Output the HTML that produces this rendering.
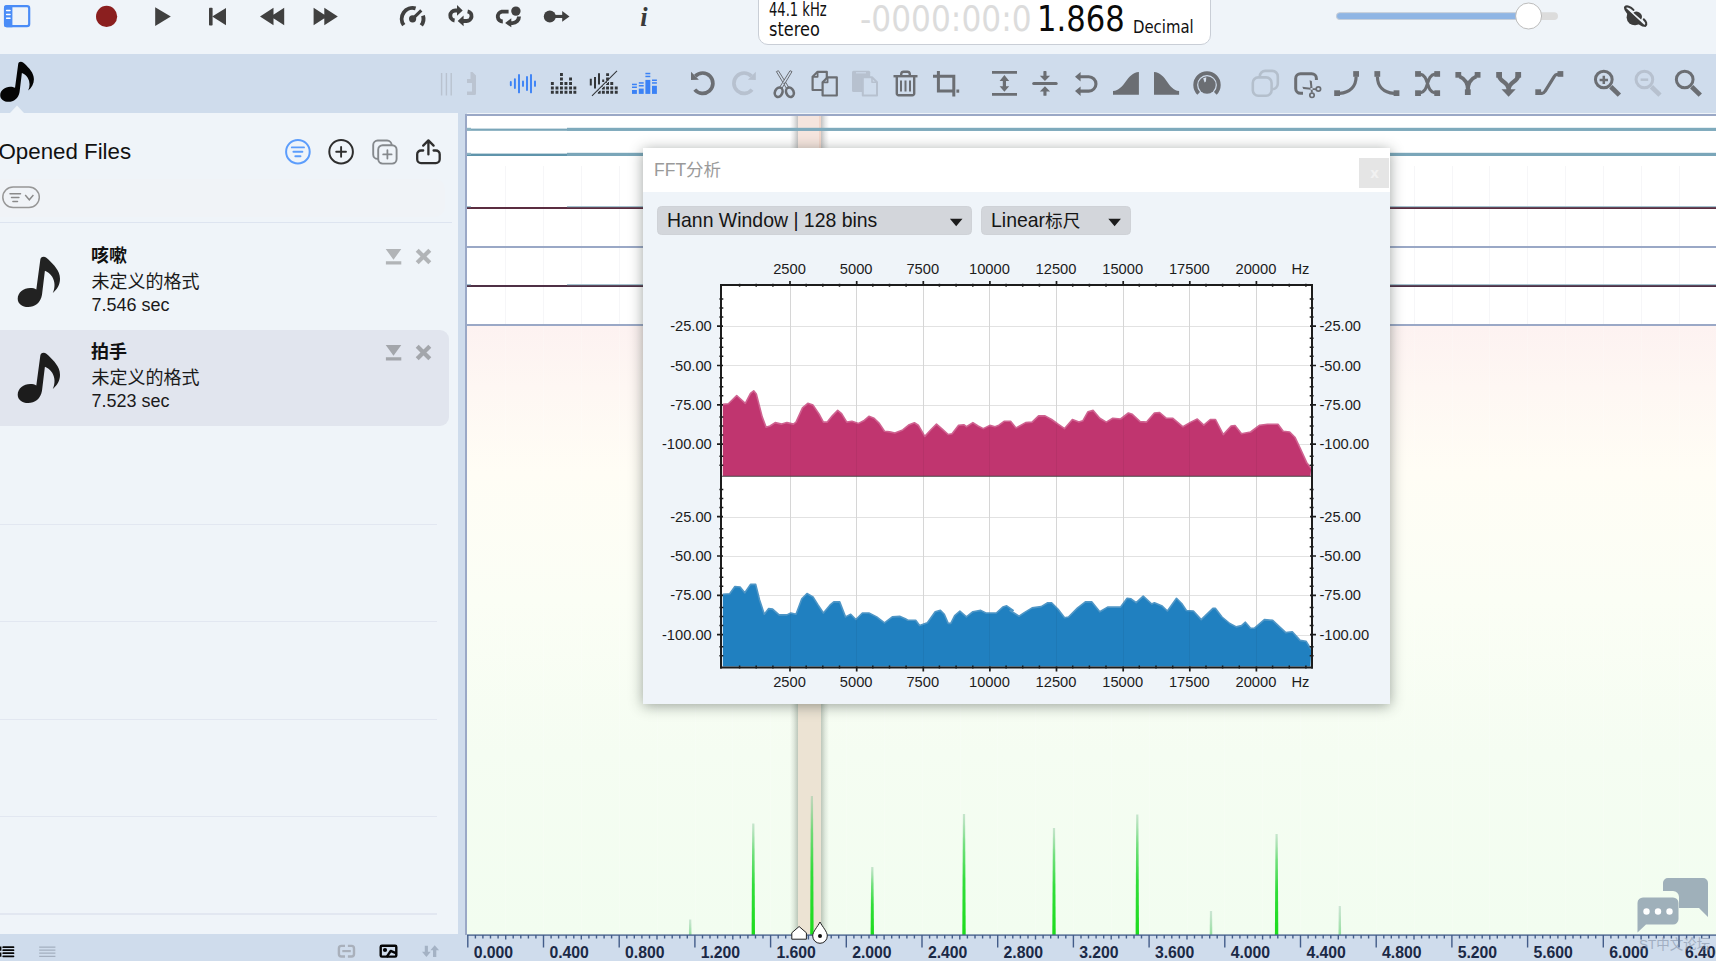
<!DOCTYPE html>
<html lang="zh"><head><meta charset="utf-8"><title>FFT</title><style>
*{box-sizing:border-box;margin:0;padding:0}
html,body{width:1716px;height:961px;overflow:hidden}
body{position:relative;background:#eff4f9;font-family:"Liberation Sans","Noto Sans CJK SC",sans-serif;color:#1a1a1a}
.abs{position:absolute}
.t{position:absolute;white-space:nowrap;line-height:1}
svg{position:absolute;left:0;top:0;overflow:visible}
#tb2{left:0;top:54px;width:1716px;height:59px;background:#cfdcec}
#side{left:0;top:113px;width:458px;height:821px;background:#eff4f9}
#split{left:458px;top:113px;width:9px;height:848px;background:#cfdcec}
#botbar{left:0;top:934px;width:1716px;height:27px;background:#cfdcec}
.hl{position:absolute;left:0;height:2px;background:#e1e7f1}
.cond{font-family:"DejaVu Sans","Liberation Sans",sans-serif}
</style></head><body>
<div class="abs" id="tb2"></div>
<div class="abs" id="side"></div>
<div class="abs" id="split"></div>
<div class="abs" id="botbar"></div>
<div class="abs" style="left:465px;top:114px;width:1251px;height:821px;background:#9aa8c6"></div>
<div class="abs" style="left:467px;top:116px;width:1249px;height:210px;background:#fff"></div>
<div class="abs" style="left:467px;top:326px;width:1249px;height:609px;background:linear-gradient(180deg,#fdf2f1 0%,#fef7f3 10%,#fffdf5 24%,#fbfef5 45%,#f5fdf2 70%,#f2fdf0 100%)"></div>
<svg width="1716" height="961" viewBox="0 0 1716 961"><rect x="505" y="166" width="1" height="158" fill="#f6f6f8"/><rect x="505" y="326" width="1" height="608" fill="#ffffff" opacity="0.18"/><rect x="543" y="166" width="1" height="158" fill="#f6f6f8"/><rect x="543" y="326" width="1" height="608" fill="#ffffff" opacity="0.18"/><rect x="581" y="166" width="1" height="158" fill="#f6f6f8"/><rect x="581" y="326" width="1" height="608" fill="#ffffff" opacity="0.18"/><rect x="619" y="166" width="1" height="158" fill="#f6f6f8"/><rect x="619" y="326" width="1" height="608" fill="#ffffff" opacity="0.18"/><rect x="657" y="166" width="1" height="158" fill="#f6f6f8"/><rect x="657" y="326" width="1" height="608" fill="#ffffff" opacity="0.18"/><rect x="695" y="166" width="1" height="158" fill="#f6f6f8"/><rect x="695" y="326" width="1" height="608" fill="#ffffff" opacity="0.18"/><rect x="732" y="166" width="1" height="158" fill="#f6f6f8"/><rect x="732" y="326" width="1" height="608" fill="#ffffff" opacity="0.18"/><rect x="770" y="166" width="1" height="158" fill="#f6f6f8"/><rect x="770" y="326" width="1" height="608" fill="#ffffff" opacity="0.18"/><rect x="808" y="166" width="1" height="158" fill="#f6f6f8"/><rect x="808" y="326" width="1" height="608" fill="#ffffff" opacity="0.18"/><rect x="846" y="166" width="1" height="158" fill="#f6f6f8"/><rect x="846" y="326" width="1" height="608" fill="#ffffff" opacity="0.18"/><rect x="884" y="166" width="1" height="158" fill="#f6f6f8"/><rect x="884" y="326" width="1" height="608" fill="#ffffff" opacity="0.18"/><rect x="922" y="166" width="1" height="158" fill="#f6f6f8"/><rect x="922" y="326" width="1" height="608" fill="#ffffff" opacity="0.18"/><rect x="960" y="166" width="1" height="158" fill="#f6f6f8"/><rect x="960" y="326" width="1" height="608" fill="#ffffff" opacity="0.18"/><rect x="997" y="166" width="1" height="158" fill="#f6f6f8"/><rect x="997" y="326" width="1" height="608" fill="#ffffff" opacity="0.18"/><rect x="1035" y="166" width="1" height="158" fill="#f6f6f8"/><rect x="1035" y="326" width="1" height="608" fill="#ffffff" opacity="0.18"/><rect x="1073" y="166" width="1" height="158" fill="#f6f6f8"/><rect x="1073" y="326" width="1" height="608" fill="#ffffff" opacity="0.18"/><rect x="1111" y="166" width="1" height="158" fill="#f6f6f8"/><rect x="1111" y="326" width="1" height="608" fill="#ffffff" opacity="0.18"/><rect x="1149" y="166" width="1" height="158" fill="#f6f6f8"/><rect x="1149" y="326" width="1" height="608" fill="#ffffff" opacity="0.18"/><rect x="1187" y="166" width="1" height="158" fill="#f6f6f8"/><rect x="1187" y="326" width="1" height="608" fill="#ffffff" opacity="0.18"/><rect x="1224" y="166" width="1" height="158" fill="#f6f6f8"/><rect x="1224" y="326" width="1" height="608" fill="#ffffff" opacity="0.18"/><rect x="1262" y="166" width="1" height="158" fill="#f6f6f8"/><rect x="1262" y="326" width="1" height="608" fill="#ffffff" opacity="0.18"/><rect x="1300" y="166" width="1" height="158" fill="#f6f6f8"/><rect x="1300" y="326" width="1" height="608" fill="#ffffff" opacity="0.18"/><rect x="1338" y="166" width="1" height="158" fill="#f6f6f8"/><rect x="1338" y="326" width="1" height="608" fill="#ffffff" opacity="0.18"/><rect x="1376" y="166" width="1" height="158" fill="#f6f6f8"/><rect x="1376" y="326" width="1" height="608" fill="#ffffff" opacity="0.18"/><rect x="1414" y="166" width="1" height="158" fill="#f6f6f8"/><rect x="1414" y="326" width="1" height="608" fill="#ffffff" opacity="0.18"/><rect x="1452" y="166" width="1" height="158" fill="#f6f6f8"/><rect x="1452" y="326" width="1" height="608" fill="#ffffff" opacity="0.18"/><rect x="1489" y="166" width="1" height="158" fill="#f6f6f8"/><rect x="1489" y="326" width="1" height="608" fill="#ffffff" opacity="0.18"/><rect x="1527" y="166" width="1" height="158" fill="#f6f6f8"/><rect x="1527" y="326" width="1" height="608" fill="#ffffff" opacity="0.18"/><rect x="1565" y="166" width="1" height="158" fill="#f6f6f8"/><rect x="1565" y="326" width="1" height="608" fill="#ffffff" opacity="0.18"/><rect x="1603" y="166" width="1" height="158" fill="#f6f6f8"/><rect x="1603" y="326" width="1" height="608" fill="#ffffff" opacity="0.18"/><rect x="1641" y="166" width="1" height="158" fill="#f6f6f8"/><rect x="1641" y="326" width="1" height="608" fill="#ffffff" opacity="0.18"/><rect x="1679" y="166" width="1" height="158" fill="#f6f6f8"/><rect x="1679" y="326" width="1" height="608" fill="#ffffff" opacity="0.18"/><defs><linearGradient id="bsh" x1="0" x2="1"><stop offset="0" stop-color="#607060" stop-opacity="0"/><stop offset="0.100" stop-color="#607060" stop-opacity="0.140"/><stop offset="0.205" stop-color="#607060" stop-opacity="0.380"/><stop offset="0.206" stop-color="#ece3d3" stop-opacity="1"/><stop offset="0.794" stop-color="#ece3d3" stop-opacity="1"/><stop offset="0.795" stop-color="#607060" stop-opacity="0.380"/><stop offset="0.900" stop-color="#607060" stop-opacity="0.140"/><stop offset="1" stop-color="#607060" stop-opacity="0"/></linearGradient><linearGradient id="bsh2" x1="0" x2="1"><stop offset="0" stop-color="#606060" stop-opacity="0"/><stop offset="0.100" stop-color="#606060" stop-opacity="0.140"/><stop offset="0.205" stop-color="#606060" stop-opacity="0.380"/><stop offset="0.206" stop-color="#f5e5de" stop-opacity="1"/><stop offset="0.750" stop-color="#f5e5de" stop-opacity="1"/><stop offset="0.751" stop-color="#f1d6ca" stop-opacity="1"/><stop offset="0.794" stop-color="#f1d6ca" stop-opacity="1"/><stop offset="0.795" stop-color="#606060" stop-opacity="0.380"/><stop offset="0.900" stop-color="#606060" stop-opacity="0.140"/><stop offset="1" stop-color="#606060" stop-opacity="0"/></linearGradient><linearGradient id="spk" x1="0" x2="0" y1="0" y2="1"><stop offset="0" stop-color="#8fc8a0" stop-opacity="0.450"/><stop offset="0.250" stop-color="#48d658" stop-opacity="0.750"/><stop offset="0.550" stop-color="#26dc30" stop-opacity="0.950"/><stop offset="1" stop-color="#1cdc1c" stop-opacity="1"/></linearGradient><linearGradient id="spf" x1="0" x2="0" y1="0" y2="1"><stop offset="0" stop-color="#9cc8b0" stop-opacity="0.450"/><stop offset="1" stop-color="#60d070" stop-opacity="0.650"/></linearGradient></defs><rect x="790" y="116" width="39" height="40" fill="url(#bsh2)"/><rect x="790" y="700" width="39" height="235" fill="url(#bsh)"/><rect x="467" y="128.6" width="1249" height="2.2" fill="#7aa6b9"/><rect x="567" y="127.8" width="1149" height="3" fill="#7eaabc"/><rect x="467" y="127.8" width="4" height="2" fill="#8fb5c4"/><rect x="467" y="153.6" width="1249" height="2.4" fill="#5f94ab"/><rect x="567" y="152.8" width="1149" height="3.2" fill="#7aa6b9"/><rect x="467" y="152.8" width="4" height="2" fill="#8fb5c4"/><rect x="467" y="207" width="1249" height="2" fill="#5b2d40"/><rect x="567" y="206.2" width="1149" height="1" fill="#8fb5c4"/><rect x="467" y="206.2" width="4" height="1" fill="#8fb5c4"/><rect x="467" y="246" width="1249" height="2" fill="#9aa8c6"/><rect x="467" y="285" width="1249" height="2" fill="#4f3045"/><rect x="567" y="284.2" width="1149" height="1" fill="#8fb5c4"/><rect x="467" y="284.2" width="4" height="1" fill="#8fb5c4"/><rect x="467" y="324" width="1249" height="2" fill="#9aa8c6"/><path d="M688.9 935 L689.1 919.5 L691.3 919.5 L691.5 935 Z" fill="url(#spf)"/><path d="M751.6 935 L752.2 823.5 L754.4 823.5 L755.0 935 Z" fill="url(#spk)"/><path d="M810.2 935 L810.8 796.0 L813.0 796.0 L813.6 935 Z" fill="url(#spk)"/><path d="M870.6 935 L871.2 867.0 L873.4 867.0 L874.0 935 Z" fill="url(#spk)"/><path d="M962.3 935 L962.9 814.0 L965.1 814.0 L965.7 935 Z" fill="url(#spk)"/><path d="M1052.3 935 L1052.9 828.0 L1055.1 828.0 L1055.7 935 Z" fill="url(#spk)"/><path d="M1135.6 935 L1136.2 814.5 L1138.4 814.5 L1139.0 935 Z" fill="url(#spk)"/><path d="M1209.7 935 L1209.9 911.0 L1212.1 911.0 L1212.3 935 Z" fill="url(#spf)"/><path d="M1274.9 935 L1275.5 834.0 L1277.7 834.0 L1278.3 935 Z" fill="url(#spk)"/><path d="M1338.5 935 L1338.7 906.0 L1340.9 906.0 L1341.1 935 Z" fill="url(#spf)"/><rect x="467" y="934.400" width="1249" height="1.400" fill="#4b658f"/><path d="M467.8 935v12.4 M475.4 935v3.6 M482.9 935v3.6 M490.5 935v3.6 M498.1 935v3.6 M505.7 935v4.6 M513.2 935v3.6 M520.8 935v3.6 M528.4 935v3.6 M535.9 935v3.6 M543.5 935v12.4 M551.1 935v3.6 M558.6 935v3.6 M566.2 935v3.6 M573.8 935v3.6 M581.3 935v4.6 M588.9 935v3.6 M596.5 935v3.6 M604.1 935v3.6 M611.6 935v3.6 M619.2 935v12.4 M626.8 935v3.6 M634.3 935v3.6 M641.9 935v3.6 M649.5 935v3.6 M657.0 935v4.6 M664.6 935v3.6 M672.2 935v3.6 M679.8 935v3.6 M687.3 935v3.6 M694.9 935v12.4 M702.5 935v3.6 M710.0 935v3.6 M717.6 935v3.6 M725.2 935v3.6 M732.8 935v4.6 M740.3 935v3.6 M747.9 935v3.6 M755.5 935v3.6 M763.0 935v3.6 M770.6 935v12.4 M778.2 935v3.6 M785.7 935v3.6 M793.3 935v3.6 M800.9 935v3.6 M808.4 935v4.6 M816.0 935v3.6 M823.6 935v3.6 M831.2 935v3.6 M838.7 935v3.6 M846.3 935v12.4 M853.9 935v3.6 M861.4 935v3.6 M869.0 935v3.6 M876.6 935v3.6 M884.1 935v4.6 M891.7 935v3.6 M899.3 935v3.6 M906.9 935v3.6 M914.4 935v3.6 M922.0 935v12.4 M929.6 935v3.6 M937.1 935v3.6 M944.7 935v3.6 M952.3 935v3.6 M959.8 935v4.6 M967.4 935v3.6 M975.0 935v3.6 M982.6 935v3.6 M990.1 935v3.6 M997.7 935v12.4 M1005.3 935v3.6 M1012.8 935v3.6 M1020.4 935v3.6 M1028.0 935v3.6 M1035.5 935v4.6 M1043.1 935v3.6 M1050.7 935v3.6 M1058.3 935v3.6 M1065.8 935v3.6 M1073.4 935v12.4 M1081.0 935v3.6 M1088.5 935v3.6 M1096.1 935v3.6 M1103.7 935v3.6 M1111.2 935v4.6 M1118.8 935v3.6 M1126.4 935v3.6 M1134.0 935v3.6 M1141.5 935v3.6 M1149.1 935v12.4 M1156.7 935v3.6 M1164.2 935v3.6 M1171.8 935v3.6 M1179.4 935v3.6 M1187.0 935v4.6 M1194.5 935v3.6 M1202.1 935v3.6 M1209.7 935v3.6 M1217.2 935v3.6 M1224.8 935v12.4 M1232.4 935v3.6 M1239.9 935v3.6 M1247.5 935v3.6 M1255.1 935v3.6 M1262.6 935v4.6 M1270.2 935v3.6 M1277.8 935v3.6 M1285.4 935v3.6 M1292.9 935v3.6 M1300.5 935v12.4 M1308.1 935v3.6 M1315.6 935v3.6 M1323.2 935v3.6 M1330.8 935v3.6 M1338.3 935v4.6 M1345.9 935v3.6 M1353.5 935v3.6 M1361.1 935v3.6 M1368.6 935v3.6 M1376.2 935v12.4 M1383.8 935v3.6 M1391.3 935v3.6 M1398.9 935v3.6 M1406.5 935v3.6 M1414.0 935v4.6 M1421.6 935v3.6 M1429.2 935v3.6 M1436.8 935v3.6 M1444.3 935v3.6 M1451.9 935v12.4 M1459.5 935v3.6 M1467.0 935v3.6 M1474.6 935v3.6 M1482.2 935v3.6 M1489.8 935v4.6 M1497.3 935v3.6 M1504.9 935v3.6 M1512.5 935v3.6 M1520.0 935v3.6 M1527.6 935v12.4 M1535.2 935v3.6 M1542.7 935v3.6 M1550.3 935v3.6 M1557.9 935v3.6 M1565.5 935v4.6 M1573.0 935v3.6 M1580.6 935v3.6 M1588.2 935v3.6 M1595.7 935v3.6 M1603.3 935v12.4 M1610.9 935v3.6 M1618.4 935v3.6 M1626.0 935v3.6 M1633.6 935v3.6 M1641.1 935v4.6 M1648.7 935v3.6 M1656.3 935v3.6 M1663.9 935v3.6 M1671.4 935v3.6 M1679.0 935v12.4 M1686.6 935v3.6 M1694.1 935v3.6 M1701.7 935v3.6 M1709.3 935v3.6" stroke="#435c89" stroke-width="1.400" fill="none"/><path d="M791.800 939.200 V932.800 L799.100 926.500 L806.400 932.800 V939.200 Z" fill="#fff" stroke="#222" stroke-width="1" stroke-linejoin="round"/><path d="M820 922 C822.5 927 827.3 931.5 827.3 936 A7.3 7.3 0 0 1 812.7 936 C812.7 931.5 817.5 927 820 922 Z" fill="#fff" stroke="#222" stroke-width="1"/><circle cx="820" cy="936" r="2" fill="#111"/><g fill="#9fb0ba"><path d="M1668 878 h35 a5 5 0 0 1 5 5 v34 l-9 -9 h-20 v-11 a6 6 0 0 0 -6 -6 h-10 v-8 a5 5 0 0 1 5 -5 z"/><path d="M1643 897.5 h30 a5.5 5.5 0 0 1 5.500 5.500 v16 a5.500 5.500 0 0 1 -5.500 5.500 h-27 l-8.500 8 v-29.500 a5.500 5.500 0 0 1 5.500 -5.500 z"/></g><g fill="#fff"><circle cx="1646.500" cy="911.500" r="3.200"/><circle cx="1658" cy="911.500" r="3.200"/><circle cx="1669.500" cy="911.500" r="3.200"/></g></svg>
<div class="t" style="left:473.7px;top:944.5px;font-size:15.800px;font-weight:bold;color:#1b2946;letter-spacing:-0.050px">0.000</div>
<div class="t" style="left:549.4px;top:944.5px;font-size:15.800px;font-weight:bold;color:#1b2946;letter-spacing:-0.050px">0.400</div>
<div class="t" style="left:625.1px;top:944.5px;font-size:15.800px;font-weight:bold;color:#1b2946;letter-spacing:-0.050px">0.800</div>
<div class="t" style="left:700.8px;top:944.5px;font-size:15.800px;font-weight:bold;color:#1b2946;letter-spacing:-0.050px">1.200</div>
<div class="t" style="left:776.5px;top:944.5px;font-size:15.800px;font-weight:bold;color:#1b2946;letter-spacing:-0.050px">1.600</div>
<div class="t" style="left:852.2px;top:944.5px;font-size:15.800px;font-weight:bold;color:#1b2946;letter-spacing:-0.050px">2.000</div>
<div class="t" style="left:927.9px;top:944.5px;font-size:15.800px;font-weight:bold;color:#1b2946;letter-spacing:-0.050px">2.400</div>
<div class="t" style="left:1003.6px;top:944.5px;font-size:15.800px;font-weight:bold;color:#1b2946;letter-spacing:-0.050px">2.800</div>
<div class="t" style="left:1079.3px;top:944.5px;font-size:15.800px;font-weight:bold;color:#1b2946;letter-spacing:-0.050px">3.200</div>
<div class="t" style="left:1155.0px;top:944.5px;font-size:15.800px;font-weight:bold;color:#1b2946;letter-spacing:-0.050px">3.600</div>
<div class="t" style="left:1230.7px;top:944.5px;font-size:15.800px;font-weight:bold;color:#1b2946;letter-spacing:-0.050px">4.000</div>
<div class="t" style="left:1306.4px;top:944.5px;font-size:15.800px;font-weight:bold;color:#1b2946;letter-spacing:-0.050px">4.400</div>
<div class="t" style="left:1382.1px;top:944.5px;font-size:15.800px;font-weight:bold;color:#1b2946;letter-spacing:-0.050px">4.800</div>
<div class="t" style="left:1457.8px;top:944.5px;font-size:15.800px;font-weight:bold;color:#1b2946;letter-spacing:-0.050px">5.200</div>
<div class="t" style="left:1533.5px;top:944.5px;font-size:15.800px;font-weight:bold;color:#1b2946;letter-spacing:-0.050px">5.600</div>
<div class="t" style="left:1609.2px;top:944.5px;font-size:15.800px;font-weight:bold;color:#1b2946;letter-spacing:-0.050px">6.000</div>
<div class="t" style="left:1684.9px;top:944.5px;font-size:15.800px;font-weight:bold;color:#1b2946;letter-spacing:-0.050px">6.400</div>
<div class="t" style="left:1639px;top:938px;font-size:13.500px;color:#7d8aa0;opacity:0.55">ST中文论坛</div>
<svg width="1716" height="54" viewBox="0 0 1716 54"><rect x="5" y="6.2" width="24.200" height="20" rx="2.200" fill="none" stroke="#4a8cf7" stroke-width="2.200"/><path d="M6.200 5.200 H12.400 V27.200 H6.200 A2.200 2.200 0 0 1 4 25 V7.400 A2.200 2.200 0 0 1 6.200 5.200 Z" fill="#4a8cf7"/><path d="M6.600 10.500 h3.400 M6.600 14.400 h3.400 M6.600 18.300 h3.400" stroke="#fff" stroke-width="1.500" stroke-linecap="round"/><circle cx="106.600" cy="16.400" r="10.600" fill="#8b1f1f"/><path d="M155.200 7.200 L170.800 16.500 L155.200 25.900 Z" fill="#404040"/><rect x="209" y="7.700" width="3.600" height="17.800" rx="0.800" fill="#404040"/><path d="M226 7.900 V25.200 L212.200 16.500 Z" fill="#404040"/><path d="M273.500 7.800 V25.200 L260 16.500 Z M284.200 7.800 V25.200 L270.700 16.500 Z" fill="#404040"/><path d="M313.600 7.800 V25.200 L327.100 16.500 Z M324.300 7.800 V25.200 L337.800 16.500 Z" fill="#404040"/><g fill="none" stroke="#404040" stroke-width="3.900"><path d="M403.78 25.21 A10.900 10.900 0 0 1 415.60 8.32"/><path d="M423.02 15.61 A10.900 10.900 0 0 1 421.31 25.36"/><path d="M412.600 18.800 L421.300 10.400" stroke-width="3.100"/></g><circle cx="412.600" cy="18.800" r="3.600" fill="#404040"/><g fill="none" stroke="#404040" stroke-width="3.900"><path d="M458 10.500 H455.300 A5 5 0 0 0 454.600 20.450"/><path d="M463 21 H466.400 A4.900 4.900 0 0 0 467.600 11.300"/></g><path d="M457 5 L462.700 10.500 L457 15.800 Z M463.600 15.500 L457.700 20.900 L463.600 26.200 Z" fill="#404040"/><g fill="none" stroke="#404040" stroke-width="3.900"><path d="M508.600 11.600 H501.800 A5 5 0 0 0 502.800 21.500"/><path d="M510.500 23.100 H512.500 A6.500 6.500 0 0 0 519 16.600"/></g><path d="M511.300 18.300 L505.100 23.100 L511.300 27.300 Z" fill="#404040"/><circle cx="515.900" cy="11.100" r="4.700" fill="#404040"/><circle cx="549.800" cy="16.400" r="6" fill="#404040"/><rect x="555" y="14.900" width="8" height="3.100" fill="#404040"/><path d="M562.200 11.100 L569.500 16.400 L562.200 21.700 Z" fill="#404040"/><rect x="1336" y="12.200" width="222" height="7.800" rx="3.900" fill="#dcdcdc"/><rect x="1336.500" y="12.700" width="200" height="6.800" rx="3.400" fill="#8fb5e4" stroke="#c9cfd8" stroke-width="0.800"/><circle cx="1528.600" cy="16" r="13" fill="#fff" stroke="#b4b4b4" stroke-width="0.900"/><g transform="translate(1635.200 16.600) rotate(42)" fill="#3c3c3c"><path d="M-8.300 0.500 A8.300 8.300 0 0 0 8.300 0.500 Z"/><path d="M-13.600 -0.200 A13.600 3.200 0 0 0 13.600 -0.200 L12.500 0.800 L-12.500 0.500 Z" stroke="#3c3c3c" stroke-width="1.500" stroke-linejoin="round"/><path d="M-4 -1.700 A5.300 5.300 0 0 1 6.400 -1.700 Z"/><path d="M-13.700 0 C-14 -2.600 -10 -4.200 -5.800 -3.800 M13.700 0 C14 -2.300 11.400 -3.800 8.200 -3.700" fill="none" stroke="#3c3c3c" stroke-width="2.100" stroke-linecap="round"/></g></svg>
<div class="t" style="left:636px;top:1.5px;width:16px;text-align:center;font-family:'Liberation Serif',serif;font-style:italic;font-weight:bold;font-size:26.500px;line-height:30px;color:#3a3a3a">i</div>
<div class="abs" style="left:758px;top:-12px;width:453px;height:57px;background:#fff;border:1px solid #c9ced6;border-radius:10px"></div>
<div class="t cond" id="khz" style="left:769px;top:-0.5px;font-size:18.800px;line-height:20px;color:#111;transform-origin:0 0;transform:scaleX(0.6975)">44.1 kHz</div>
<div class="t cond" id="ste" style="left:769px;top:19.5px;font-size:19.500px;line-height:20px;color:#111;transform-origin:0 0;transform:scaleX(0.8280)">stereo</div>
<div class="t cond" id="tg" style="left:860px;top:-3.2px;font-size:36px;line-height:44px;color:#dcdcdc;transform-origin:0 0;transform:scaleX(0.8685)">-0000:00:0</div>
<div class="t cond" id="tb" style="left:1037px;top:-3.2px;font-size:36px;line-height:44px;color:#0a0a0a;transform-origin:0 0;transform:scaleX(0.8505)">1.868</div>
<div class="t cond" id="dec" style="left:1132.500px;top:15.5px;font-size:17.600px;line-height:22px;color:#111;transform-origin:0 0;transform:scaleX(0.8460)">Decimal</div>
<svg width="1716" height="120" viewBox="0 0 1716 120"><path d="M10 113 L17 105.500 L24 113 Z" fill="#eff4f9"/><path transform="translate(0.200 61.700) scale(0.797)" d="M25.900 0 C28 0 29.500 1.500 31 3 C36 8 42.300 14 42.300 22 C42.300 28 39.500 32.500 35.100 36.200 C37.500 31 37.500 25 34.500 20 C32.500 17 30 15.300 27.200 14.100 L24.300 38 C23 46 17 50.300 10.500 50.300 C4.500 50.300 0 47 0 42 C0 36 6 31.400 12.500 31.400 C15 31.400 17 31.900 18.600 32.800 L22.600 3 C22.800 1 24 0 25.900 0 Z" fill="#050505"/><path d="M441.600 73 V95.500 M446.400 73 V95.500 M451.200 73 V95.500" stroke="#b9c2cf" stroke-width="1.400" fill="none"/><path d="M470.500 72 H472.500 L476 75.500 V93.500 A1.500 1.500 0 0 1 474.500 95 H467 V91.500 H472 V83 H467 V79 H470.500 Z" fill="#bbc4d1"/><path d="M510.8 81.9 V85.2 M514.9 79.1 V88.0 M519.0 74.9 V92.4 M523.0 81.5 V85.9 M527.0 77.0 V90.1 M531.0 74.9 V92.4 M535.0 81.5 V85.9" stroke="#3b82f6" stroke-width="1.900" stroke-linecap="round" fill="none"/><path d="M550.9 82.1h2.900v2.900h-2.900zM550.9 86.5h2.900v2.900h-2.900zM550.9 90.8h2.900v2.900h-2.900zM555.5 86.5h2.900v2.900h-2.900zM555.5 90.8h2.900v2.900h-2.900zM560.0 73.1h2.900v2.900h-2.900zM560.0 77.5h2.900v2.900h-2.900zM560.0 82.1h2.900v2.900h-2.900zM560.0 86.5h2.900v2.900h-2.900zM560.0 90.8h2.900v2.900h-2.900zM564.5 82.1h2.900v2.900h-2.900zM564.5 86.5h2.900v2.900h-2.900zM564.5 90.8h2.900v2.900h-2.900zM569.1 77.5h2.900v2.900h-2.900zM569.1 82.1h2.900v2.900h-2.900zM569.1 86.5h2.900v2.900h-2.900zM569.1 90.8h2.900v2.900h-2.900zM573.4 86.5h2.900v2.900h-2.900zM573.4 90.8h2.900v2.900h-2.900z" fill="#333639"/><path d="M590.8 78.8 V85.5 M595.0 77.0 V88.6 M599.0 73.2 V84.5 M603.2 79.5 V82.0" stroke="#333639" stroke-width="2" fill="none"/><path d="M597.8 90.8h2.900v2.900h-2.900zM601.9 86.5h2.900v2.900h-2.900zM601.9 90.8h2.900v2.900h-2.900zM606.1 77.5h2.900v2.900h-2.900zM606.1 82.1h2.900v2.900h-2.900zM606.1 86.5h2.900v2.900h-2.900zM606.1 90.8h2.900v2.900h-2.900zM610.3 82.1h2.900v2.900h-2.900zM610.3 86.5h2.900v2.900h-2.900zM610.3 90.8h2.900v2.900h-2.900zM614.8 86.5h2.900v2.900h-2.900zM614.8 90.8h2.900v2.900h-2.900zM606.150 73.200h2.900v2.900h-2.900z" fill="#333639"/><path d="M592 95.800 L617 70.800" stroke="#333639" stroke-width="1.100"/><path d="M593.300 96.600 L618.300 71.600" stroke="#cfdcec" stroke-width="1"/><rect x="632.0" y="90.0" width="4.900" height="3.9" fill="#3b82f6"/><rect x="632.0" y="83.7" width="4.900" height="1.500" fill="#3b82f6"/><rect x="632.0" y="86.5" width="4.900" height="1.500" fill="#3b82f6"/><rect x="638.8" y="88.6" width="4.900" height="5.3" fill="#3b82f6"/><rect x="638.8" y="82.2" width="4.900" height="1.500" fill="#3b82f6"/><rect x="638.8" y="85.0" width="4.900" height="1.500" fill="#3b82f6"/><rect x="645.4" y="79.9" width="4.900" height="14.0" fill="#3b82f6"/><rect x="645.4" y="72.8" width="4.900" height="1.500" fill="#3b82f6"/><rect x="645.4" y="75.7" width="4.900" height="1.500" fill="#3b82f6"/><rect x="652.0" y="85.8" width="4.900" height="8.1" fill="#3b82f6"/><rect x="652.0" y="79.5" width="4.900" height="1.500" fill="#3b82f6"/><rect x="652.0" y="82.2" width="4.900" height="1.500" fill="#3b82f6"/><g transform="translate(702.7 83.2) scale(1 1)" ><path d="M-7.34 -7.09 A10.2 10.2 0 1 1 -7.93 6.42" fill="none" stroke="#6b6e73" stroke-width="3.700"/><path d="M-11.700 -11.400 V-3.200 L-3.800 -3.500 Z" fill="#6b6e73"/></g><g transform="translate(744.1 83.2) scale(-1 1)" ><path d="M-7.34 -7.09 A10.2 10.2 0 1 1 -7.93 6.42" fill="none" stroke="#b7c1cf" stroke-width="3.700"/><path d="M-11.700 -11.400 V-3.200 L-3.800 -3.500 Z" fill="#b7c1cf"/></g><g fill="#cfdcec" stroke="#6b6e73"><path d="M776.400 71.600 L778.400 70.700 L789.200 88 L786.600 88.600 Z" stroke-width="1" stroke-linejoin="round"/><path d="M792 71.600 L790 70.700 L779.200 88 L781.800 88.600 Z" stroke-width="1" stroke-linejoin="round"/><ellipse cx="778.700" cy="92.200" rx="3.700" ry="4.900" transform="rotate(22 778.700 92.200)" stroke-width="2.600" fill="none"/><ellipse cx="789.900" cy="92.200" rx="3.700" ry="4.900" transform="rotate(-22 789.900 92.200)" stroke-width="2.600" fill="none"/></g><circle cx="784.200" cy="83.400" r="0.800" fill="#6b6e73"/><path d="M817.6 71.8 H826.8 V90.0 H812.6 V76.8 Z" fill="#cfdcec" stroke="#6b6e73" stroke-width="2.2" stroke-linejoin="round"/><path d="M817.6 71.8 V76.8 H812.6" fill="none" stroke="#6b6e73" stroke-width="1.7600000000000002" stroke-linejoin="round"/><path d="M827.6 77.3 H836.8 V95.5 H822.6 V82.3 Z" fill="#cfdcec" stroke="#6b6e73" stroke-width="2.2" stroke-linejoin="round"/><path d="M827.6 77.3 V82.3 H822.6" fill="none" stroke="#6b6e73" stroke-width="1.7600000000000002" stroke-linejoin="round"/><rect x="852" y="70.700" width="18.200" height="21.300" rx="1.500" fill="#b7c1cf"/><rect x="856" y="72" width="10" height="1.500" fill="#cfdcec" opacity="0.700"/><path d="M862.8 77.2 H872.0 L877.0 82.2 V95.4 H862.8 Z" fill="#cfdcec" stroke="#b7c1cf" stroke-width="2" stroke-linejoin="round"/><path d="M872.0 77.2 V82.2 H877.0" fill="none" stroke="#b7c1cf" stroke-width="1.6" stroke-linejoin="round"/><g fill="none" stroke="#6b6e73" stroke-width="2.400"><path d="M893.500 76.200 H917.500"/><path d="M901.200 76 V74 A2.500 2.500 0 0 1 903.700 71.700 H907.300 A2.500 2.500 0 0 1 909.800 74 V76"/><path d="M896.800 76.200 V93.500 A1.800 1.800 0 0 0 898.600 95.300 H912.400 A1.800 1.800 0 0 0 914.200 93.500 V76.200"/><path d="M901 80.500 V91.500 M905.500 80.500 V91.500 M910 80.500 V91.500" stroke-width="2"/></g><g fill="none" stroke="#6b6e73" stroke-width="3"><path d="M938.400 71 V91 H953.600"/><path d="M933 76.200 H953.800 V96.600"/></g><rect x="956.400" y="89.500" width="2.800" height="3.200" fill="#6b6e73"/><path d="M992 71 H1017 V73.800 H992 Z M992 93 H1017 V95.800 H992 Z" fill="#6b6e73"/><path d="M1004.400 75 L1009.200 80.900 H1006 V86.300 H1009.200 L1004.400 91.800 L999.600 86.300 H1002.800 V80.900 H999.600 Z" fill="#6b6e73"/><rect x="1032.200" y="82" width="25.500" height="3" rx="1.500" fill="#6b6e73"/><path d="M1043.400 71.600 A0.600 0.600 0 0 1 1044 71 H1045.900 A0.600 0.600 0 0 1 1046.500 71.600 V75.800 H1050.100 L1044.950 80.900 L1039.800 75.800 H1043.400 Z M1043.400 95.200 A0.600 0.600 0 0 0 1044 95.800 H1045.900 A0.600 0.600 0 0 0 1046.500 95.200 V91.600 H1050.100 L1044.950 86.300 L1039.800 91.600 H1043.400 Z" fill="#6b6e73"/><path d="M1079.500 76.800 H1088.800 A7.150 7.150 0 0 1 1088.800 91.100 H1079.500" fill="none" stroke="#6b6e73" stroke-width="3.100"/><path d="M1080.600 72 V81.600 L1075 76.800 Z M1080.600 86.400 V95.900 L1075 91.100 Z" fill="#6b6e73"/><path d="M1113 94.800 V91 C1125 90.400 1126.500 72.600 1138.900 72 V94.800 Z" fill="#6b6e73"/><path d="M1154 72 C1166.400 72.600 1167.900 90.400 1179.100 91 V94.800 H1154 Z" fill="#6b6e73"/><circle cx="1207" cy="85" r="8.700" fill="#6b6e73"/><path d="M1198.650 93.350 A11.800 11.800 0 1 1 1215.350 93.350" fill="none" stroke="#6b6e73" stroke-width="3.800"/><path d="M1203.200 78.300 L1206.300 77.200 L1205.900 81.600 L1204.600 82.400 Z" fill="#d6e0ee"/><g fill="#cfdcec" stroke="#b4bfcc" stroke-width="2.600"><rect x="1259.800" y="70.900" width="18" height="18.400" rx="5.500"/><rect x="1252.800" y="77.400" width="18.800" height="18.400" rx="5.500"/></g><path d="M1303 93.300 H1300.500 A4.800 4.800 0 0 1 1295.700 88.500 V78.500 A4.800 4.800 0 0 1 1300.500 73.700 H1311.600 A4.800 4.800 0 0 1 1316.400 78.500 V80" fill="none" stroke="#6b6e73" stroke-width="3"/><path d="M1309.600 80.200 L1311.800 81 L1312.900 92.600 L1311 92.800 Z M1302.300 86.800 L1303.300 88.900 L1316.300 90.300 L1316.500 88.600 Z" fill="#6b6e73"/><g fill="none" stroke="#6b6e73" stroke-width="1.700"><circle cx="1318.400" cy="89" r="2.200"/><circle cx="1312" cy="95.300" r="2.200"/></g><rect x="1334.2" y="90.3" width="5.800" height="5.700" fill="#6b6e73"/><rect x="1353.2" y="71.1" width="5.800" height="5.700" fill="#6b6e73"/><path d="M1339.500 93.400 C1350 92.500 1356.100 86.500 1356.100 76.500" fill="none" stroke="#6b6e73" stroke-width="3.200"/><rect x="1374.4" y="71.1" width="5.800" height="5.700" fill="#6b6e73"/><rect x="1393.6" y="90.3" width="5.800" height="5.700" fill="#6b6e73"/><path d="M1377.400 76.500 C1377.400 86.500 1383.500 92.500 1394 93.400" fill="none" stroke="#6b6e73" stroke-width="3.200"/><rect x="1415.1" y="71.1" width="5.800" height="5.700" fill="#6b6e73"/><rect x="1434.3" y="71.1" width="5.800" height="5.700" fill="#6b6e73"/><rect x="1415.1" y="90.3" width="5.800" height="5.700" fill="#6b6e73"/><rect x="1434.3" y="90.3" width="5.800" height="5.700" fill="#6b6e73"/><path d="M1420 74 C1429.500 75.500 1425.500 91.500 1435 93 M1420 93 C1429.500 91.500 1425.500 75.500 1435 74" fill="none" stroke="#6b6e73" stroke-width="3"/><rect x="1455.4" y="72.0" width="5.800" height="5.700" fill="#6b6e73"/><rect x="1474.7" y="72.0" width="5.800" height="5.700" fill="#6b6e73"/><rect x="1464.9" y="89.3" width="5.800" height="5.700" fill="#6b6e73"/><path d="M1459.500 76.500 C1465.500 79 1467.900 83 1467.900 90 M1476.300 76.500 C1470.300 79 1467.900 83 1467.900 90" fill="none" stroke="#6b6e73" stroke-width="3.800"/><rect x="1496.2" y="72.0" width="5.800" height="5.700" fill="#6b6e73"/><rect x="1515.3" y="72.0" width="5.800" height="5.700" fill="#6b6e73"/><path d="M1499.300 76.500 C1500.500 82.500 1508.600 81.500 1508.600 90 M1518 76.500 C1516.800 82.500 1508.600 81.500 1508.600 90" fill="none" stroke="#6b6e73" stroke-width="4.200"/><path d="M1501.500 89.200 H1515.700 L1508.600 96.800 Z" fill="#6b6e73"/><rect x="1535.3" y="89.3" width="5.800" height="5.700" fill="#6b6e73"/><rect x="1557.5" y="71.1" width="5.800" height="5.700" fill="#6b6e73"/><path d="M1540 93.300 H1542 C1543.500 93.300 1544 93 1545 91.300 L1554.300 76.300 C1555.300 74.600 1555.800 74.300 1557.300 74.300 H1560" fill="none" stroke="#6b6e73" stroke-width="3.200"/><circle cx="1603.8" cy="79.5" r="8.350" fill="none" stroke="#6b6e73" stroke-width="3"/><path d="M1610.8 86.7 L1619.4 95.1" stroke="#6b6e73" stroke-width="4.700" /><path d="M1599.6 79.9 h8.400 M1603.8 75.7 v8.400" stroke="#6b6e73" stroke-width="2.500"/><circle cx="1644.4" cy="79.5" r="8.350" fill="none" stroke="#b7c1cf" stroke-width="3"/><path d="M1651.4 86.7 L1660.0 95.1" stroke="#b7c1cf" stroke-width="4.700" /><path d="M1640.6 79.7 h7.600" stroke="#b7c1cf" stroke-width="2.500"/><circle cx="1684.7" cy="79.5" r="8.350" fill="none" stroke="#6b6e73" stroke-width="3"/><path d="M1691.7 86.7 L1700.3 95.1" stroke="#6b6e73" stroke-width="4.700" /></svg>
<div class="abs" style="left:-10px;top:329.5px;width:458.500px;height:96px;border-radius:9px;background:#e1e5ee"></div>
<div class="abs" style="left:0;top:179px;width:445px;height:38px;border-radius:0 10px 10px 0;background:#f0f3f7"></div>
<div class="abs" style="left:0;top:222px;width:452px;height:1.300px;background:#dde4f0"></div>
<div class="abs" style="left:0;top:523.6px;width:437px;height:1.400px;background:#e2e7f1"></div>
<div class="abs" style="left:0;top:621.0px;width:437px;height:1.400px;background:#e2e7f1"></div>
<div class="abs" style="left:0;top:718.6px;width:437px;height:1.400px;background:#e2e7f1"></div>
<div class="abs" style="left:0;top:816.0px;width:437px;height:1.400px;background:#e2e7f1"></div>
<div class="abs" style="left:0;top:913.2px;width:437px;height:1.400px;background:#e2e7f1"></div>
<svg width="470" height="961" viewBox="0 0 470 961"><circle cx="297.900" cy="151.700" r="11.800" fill="none" stroke="#5c9dfc" stroke-width="2"/><path d="M291.800 147.400 H304 M293.400 151.800 H302.400 M295.300 156.200 H300.500" stroke="#5c9dfc" stroke-width="1.900" stroke-linecap="round"/><circle cx="341.100" cy="151.700" r="11.800" fill="none" stroke="#2e2e2e" stroke-width="2"/><path d="M336.200 151.800 H346 M341.100 146.900 V156.700" stroke="#2e2e2e" stroke-width="1.900" stroke-linecap="round"/><g fill="#eff4f9" stroke="#85898d" stroke-width="1.900"><rect x="373.200" y="140.500" width="18.400" height="18.400" rx="4.500"/><rect x="378.200" y="145.200" width="18.400" height="18.400" rx="4.500"/></g><path d="M383.200 154.400 H391.600 M387.400 150.200 V158.600" stroke="#85898d" stroke-width="1.800" stroke-linecap="round"/><g fill="none" stroke="#2e2e2e" stroke-width="2.300" stroke-linecap="round" stroke-linejoin="round"><path d="M423.200 150.500 H421 A3.800 3.800 0 0 0 417.200 154.300 V159.300 A3.800 3.800 0 0 0 421 163.100 H435.900 A3.800 3.800 0 0 0 439.700 159.300 V154.300 A3.800 3.800 0 0 0 435.900 150.500 H433.600"/><path d="M428.400 154.400 V140.800 M423.200 145.600 L428.400 140.400 L433.600 145.600"/></g><rect x="2.800" y="187" width="36.500" height="20.600" rx="10.300" fill="none" stroke="#979797" stroke-width="1.500"/><path d="M10 193.700 H20.500 M11.500 197.600 H18.900 M12.900 201.400 H17.500" stroke="#8a8a8a" stroke-width="1.500" stroke-linecap="round"/><path d="M25.200 195 L29.300 199.800 L33.400 195" fill="none" stroke="#8a8a8a" stroke-width="1.400"/><path transform="translate(17.7 256.7) scale(1.0)" d="M25.900 0 C28 0 29.500 1.500 31 3 C36 8 42.300 14 42.300 22 C42.300 28 39.500 32.500 35.100 36.200 C37.500 31 37.500 25 34.500 20 C32.500 17 30 15.300 27.200 14.100 L24.300 38 C23 46 17 50.300 10.500 50.300 C4.500 50.300 0 47 0 42 C0 36 6 31.400 12.500 31.400 C15 31.400 17 31.900 18.600 32.800 L22.600 3 C22.800 1 24 0 25.900 0 Z" fill="#222"/><path transform="translate(17.7 352.7) scale(1.0)" d="M25.900 0 C28 0 29.500 1.500 31 3 C36 8 42.300 14 42.300 22 C42.300 28 39.500 32.500 35.100 36.200 C37.500 31 37.500 25 34.500 20 C32.500 17 30 15.300 27.200 14.100 L24.300 38 C23 46 17 50.300 10.500 50.300 C4.500 50.300 0 47 0 42 C0 36 6 31.400 12.500 31.400 C15 31.400 17 31.900 18.600 32.800 L22.600 3 C22.800 1 24 0 25.900 0 Z" fill="#1c1c1c"/><path d="M385.700 249.1 H401.300 L393.500 259.7 Z M385.900 261.2 H401.300 V264.4 H385.900 Z" fill="#b1b4b7"/><path d="M417.200 250.2 L429.800 262.8 M429.800 250.2 L417.200 262.8" stroke="#b1b4b7" stroke-width="4.200" fill="none"/><path d="M385.700 345.1 H401.300 L393.500 355.7 Z M385.900 357.2 H401.300 V360.4 H385.900 Z" fill="#a3a6ab"/><path d="M417.200 346.2 L429.800 358.8 M429.800 346.2 L417.200 358.8" stroke="#a3a6ab" stroke-width="4.200" fill="none"/><path d="M-2 946.500 H1.400 V950.700 H-2 Z M-2 952.500 H1.400 V956.700 H-2 Z" fill="#050505"/><path d="M3.200 947.200 H13.500 M3.200 950.200 H13.500 M3.200 953.200 H13.500 M3.200 956.300 H13.500" stroke="#050505" stroke-width="1.700" stroke-linecap="round"/><path d="M39.200 947.200 H55.400 M39.200 950.200 H55.400 M39.200 953.200 H55.400 M39.200 956.300 H55.400" stroke="#a4afbf" stroke-width="1.300"/><g fill="none" stroke="#a9b0bb" stroke-width="2.400"><path d="M345 945.900 H341.400 A2.500 2.500 0 0 0 338.900 948.400 V954 A2.500 2.500 0 0 0 341.400 956.500 H345 M347.900 945.900 H351.500 A2.500 2.500 0 0 1 354 948.400 V954 A2.500 2.500 0 0 1 351.500 956.500 H347.900"/><path d="M342.300 951.100 H350.800" stroke-width="2.200"/></g><rect x="380.700" y="945.700" width="15.600" height="10.900" rx="1.200" fill="none" stroke="#050505" stroke-width="2.400"/><circle cx="385" cy="950" r="2.100" fill="#050505"/><path d="M386.600 957.200 L390.700 950.900 L396.400 953.400" fill="none" stroke="#050505" stroke-width="2.400" stroke-linejoin="round"/><path d="M424.800 945.800 H427.900 V951.700 H430.800 L426.400 957 L422 951.700 H424.800 Z M433 957 H436.300 V950.300 H439.100 L434.700 945.300 L430.400 950.300 H433 Z" fill="#a4b2c4"/></svg>
<div class="t" id="of" style="left:-1.500px;top:139px;font-size:22.300px;line-height:26px;color:#111">Opened Files</div>
<div class="t" style="left:91px;top:246.3px;font-size:18px;line-height:20px;font-weight:bold;color:#111;font-family:'Liberation Sans','Noto Sans CJK SC',sans-serif">咳嗽</div><div class="t" style="left:91.500px;top:270.8px;font-size:18px;line-height:22px;color:#1a1a1a">未定义的格式</div><div class="t" style="left:91.500px;top:294.0px;font-size:18px;line-height:22px;color:#1a1a1a">7.546 sec</div>
<div class="t" style="left:91px;top:342.3px;font-size:18px;line-height:20px;font-weight:bold;color:#111;font-family:'Liberation Sans','Noto Sans CJK SC',sans-serif">拍手</div><div class="t" style="left:91.500px;top:366.8px;font-size:18px;line-height:22px;color:#1a1a1a">未定义的格式</div><div class="t" style="left:91.500px;top:390.0px;font-size:18px;line-height:22px;color:#1a1a1a">7.523 sec</div>
<div class="abs" style="left:643px;top:147.500px;width:747px;height:556px;background:#eff4f9;box-shadow:0 2px 13px rgba(40,50,45,0.450)"></div>
<div class="abs" style="left:643px;top:147.500px;width:747px;height:44px;background:#fff"></div>
<div class="t" style="left:654px;top:158px;font-size:17.500px;line-height:24px;color:#9a9a9a">FFT分析</div>
<div class="abs" style="left:1359px;top:158.100px;width:30px;height:29.700px;background:#e5e5e5"></div>
<div class="t" style="left:1359px;top:158.100px;width:31px;height:29.700px;text-align:center;font-family:'DejaVu Sans','Liberation Sans',sans-serif;font-weight:bold;font-size:13.500px;line-height:30px;color:#f1f1f1">x</div>
<div class="abs" style="left:657px;top:206.200px;width:314.500px;height:28.800px;border-radius:4.500px;background:#d3d6db;border:1px solid #cfd2d7"></div>
<div class="t" style="left:667px;top:207.800px;font-size:19.450px;line-height:24px;color:#151515">Hann Window | 128 bins</div>
<div class="abs" style="left:981px;top:206.200px;width:150px;height:28.800px;border-radius:4.500px;background:#d3d6db;border:1px solid #cfd2d7"></div>
<div class="t" style="left:991px;top:207.800px;font-size:19.450px;line-height:24px;color:#151515">Linear<span style="font-size:17.600px">标尺</span></div>
<svg width="1716" height="961" viewBox="0 0 1716 961"><path d="M949.900 218.800 H962.500 L956.200 226.200 Z M1108.300 218.800 H1120.900 L1114.600 226.200 Z" fill="#1c1c1c"/><rect x="722.0" y="286.0" width="589.0" height="380.6" fill="#fff"/><path d="M790.5 286.0 V666.6 M856.5 286.0 V666.6 M923.5 286.0 V666.6 M989.5 286.0 V666.6 M1056.5 286.0 V666.6 M1123.5 286.0 V666.6 M1189.5 286.0 V666.6 M1256.5 286.0 V666.6 M722.0 326.5 H1311.0 M722.0 517.5 H1311.0 M722.0 365.5 H1311.0 M722.0 556.5 H1311.0 M722.0 405.5 H1311.0 M722.0 595.5 H1311.0 M722.0 444.5 H1311.0 M722.0 635.5 H1311.0" stroke="#e2e2e2" stroke-width="1" fill="none"/><path d="M722.8 476.3 L722.8 404.4 L728.4 403.8 L736.7 395.5 L745.3 403.3 L750.5 393.4 L753.7 390.8 L756.3 394.0 L762.2 416.9 L766.1 427.3 L770.0 426.0 L775.2 422.6 L781.7 424.1 L786.9 422.6 L793.4 424.1 L796.0 422.1 L802.5 407.8 L807.8 403.3 L813.0 405.1 L819.5 414.8 L823.4 422.1 L827.3 422.1 L832.5 415.6 L837.7 410.4 L841.6 413.7 L846.8 422.1 L852.0 421.3 L858.5 423.4 L863.7 420.8 L868.9 416.3 L874.1 418.2 L879.3 423.4 L884.5 431.2 L889.7 431.9 L894.9 433.0 L902.7 429.9 L909.2 424.7 L914.4 422.8 L918.3 425.2 L924.8 436.4 L931.3 429.3 L936.5 424.1 L941.7 428.6 L948.2 434.5 L952.1 433.8 L958.6 425.2 L963.8 424.7 L966.4 426.7 L972.9 422.6 L978.1 426.0 L983.3 428.6 L989.8 425.4 L995.0 426.7 L998.9 425.2 L1004.1 421.3 L1010.6 421.3 L1015.8 427.8 L1016.5 427.8 L1025.6 422.6 L1032.1 422.1 L1038.6 415.9 L1045.1 415.9 L1051.6 419.5 L1058.1 424.2 L1064.6 428.6 L1072.4 419.5 L1078.9 422.1 L1082.8 420.8 L1088.0 411.7 L1093.2 410.4 L1099.8 418.2 L1106.3 422.1 L1112.8 418.2 L1120.6 419.0 L1128.4 413.0 L1132.3 414.3 L1140.1 421.6 L1146.6 422.1 L1154.4 413.0 L1159.6 412.5 L1166.1 418.2 L1172.6 418.2 L1183.0 426.8 L1190.8 422.1 L1197.3 419.0 L1203.8 425.2 L1210.3 419.5 L1215.5 419.5 L1223.3 434.6 L1231.1 426.0 L1235.0 425.5 L1241.5 433.8 L1250.6 432.0 L1259.7 425.2 L1267.5 424.2 L1278.0 424.2 L1283.2 431.2 L1289.7 432.0 L1294.9 437.2 L1300.1 448.1 L1306.6 462.4 L1311.2 468.4 L1310.5 476.3 Z" fill="#c0356f"/><path d="M722.8 404.4 L728.4 403.8 L736.7 395.5 L745.3 403.3 L750.5 393.4 L753.7 390.8 L756.3 394.0 L762.2 416.9 L766.1 427.3 L770.0 426.0 L775.2 422.6 L781.7 424.1 L786.9 422.6 L793.4 424.1 L796.0 422.1 L802.5 407.8 L807.8 403.3 L813.0 405.1 L819.5 414.8 L823.4 422.1 L827.3 422.1 L832.5 415.6 L837.7 410.4 L841.6 413.7 L846.8 422.1 L852.0 421.3 L858.5 423.4 L863.7 420.8 L868.9 416.3 L874.1 418.2 L879.3 423.4 L884.5 431.2 L889.7 431.9 L894.9 433.0 L902.7 429.9 L909.2 424.7 L914.4 422.8 L918.3 425.2 L924.8 436.4 L931.3 429.3 L936.5 424.1 L941.7 428.6 L948.2 434.5 L952.1 433.8 L958.6 425.2 L963.8 424.7 L966.4 426.7 L972.9 422.6 L978.1 426.0 L983.3 428.6 L989.8 425.4 L995.0 426.7 L998.9 425.2 L1004.1 421.3 L1010.6 421.3 L1015.8 427.8 L1016.5 427.8 L1025.6 422.6 L1032.1 422.1 L1038.6 415.9 L1045.1 415.9 L1051.6 419.5 L1058.1 424.2 L1064.6 428.6 L1072.4 419.5 L1078.9 422.1 L1082.8 420.8 L1088.0 411.7 L1093.2 410.4 L1099.8 418.2 L1106.3 422.1 L1112.8 418.2 L1120.6 419.0 L1128.4 413.0 L1132.3 414.3 L1140.1 421.6 L1146.6 422.1 L1154.4 413.0 L1159.6 412.5 L1166.1 418.2 L1172.6 418.2 L1183.0 426.8 L1190.8 422.1 L1197.3 419.0 L1203.8 425.2 L1210.3 419.5 L1215.5 419.5 L1223.3 434.6 L1231.1 426.0 L1235.0 425.5 L1241.5 433.8 L1250.6 432.0 L1259.7 425.2 L1267.5 424.2 L1278.0 424.2 L1283.2 431.2 L1289.7 432.0 L1294.9 437.2 L1300.1 448.1 L1306.6 462.4 L1311.2 468.4" fill="none" stroke="#cf6391" stroke-width="1.600" stroke-linejoin="round"/><path d="M722.8 666.6 L722.8 594.3 L729.7 593.8 L734.9 586.5 L740.1 587.0 L744.8 592.8 L750.5 584.4 L755.7 584.4 L759.6 600.0 L764.3 614.3 L768.7 608.6 L772.6 609.1 L779.1 614.9 L786.9 614.9 L790.8 613.0 L796.0 614.3 L801.8 598.7 L807.0 593.5 L813.0 596.9 L818.2 605.2 L823.4 613.0 L829.9 605.2 L833.8 601.9 L839.7 601.9 L845.5 616.9 L850.7 614.3 L855.9 619.5 L862.4 613.0 L868.9 613.0 L876.7 616.9 L884.5 622.9 L892.3 616.9 L900.1 616.4 L905.3 618.8 L907.9 620.3 L915.7 620.3 L919.6 625.5 L927.4 622.7 L935.2 611.7 L940.4 610.4 L944.3 614.3 L948.2 623.4 L950.8 623.4 L954.7 615.6 L959.9 611.2 L966.4 616.9 L972.9 611.7 L980.7 610.4 L985.9 613.0 L996.3 613.0 L1002.8 607.1 L1006.7 605.8 L1013.2 610.4 L1010.0 610.5 L1019.1 616.2 L1024.3 612.6 L1032.1 607.9 L1041.2 606.6 L1047.7 602.7 L1051.6 602.7 L1058.1 609.2 L1064.6 617.8 L1068.5 617.0 L1077.6 607.9 L1085.4 601.9 L1091.9 601.9 L1099.8 611.8 L1107.6 607.1 L1120.6 607.1 L1127.1 598.3 L1131.0 598.8 L1136.2 602.7 L1143.2 596.2 L1151.8 604.0 L1154.4 602.7 L1162.2 606.1 L1167.4 611.0 L1176.5 598.3 L1181.7 603.5 L1186.4 610.5 L1193.4 611.0 L1201.2 619.6 L1212.9 608.4 L1215.5 608.4 L1222.0 617.0 L1229.8 623.5 L1236.3 626.9 L1241.5 625.6 L1245.4 622.2 L1250.6 628.2 L1254.5 628.2 L1264.4 619.6 L1272.7 620.4 L1285.8 632.6 L1292.3 631.8 L1300.1 640.4 L1306.0 641.2 L1311.2 649.5 L1310.5 666.6 Z" fill="#2080c0"/><path d="M722.8 594.3 L729.7 593.8 L734.9 586.5 L740.1 587.0 L744.8 592.8 L750.5 584.4 L755.7 584.4 L759.6 600.0 L764.3 614.3 L768.7 608.6 L772.6 609.1 L779.1 614.9 L786.9 614.9 L790.8 613.0 L796.0 614.3 L801.8 598.7 L807.0 593.5 L813.0 596.9 L818.2 605.2 L823.4 613.0 L829.9 605.2 L833.8 601.9 L839.7 601.9 L845.5 616.9 L850.7 614.3 L855.9 619.5 L862.4 613.0 L868.9 613.0 L876.7 616.9 L884.5 622.9 L892.3 616.9 L900.1 616.4 L905.3 618.8 L907.9 620.3 L915.7 620.3 L919.6 625.5 L927.4 622.7 L935.2 611.7 L940.4 610.4 L944.3 614.3 L948.2 623.4 L950.8 623.4 L954.7 615.6 L959.9 611.2 L966.4 616.9 L972.9 611.7 L980.7 610.4 L985.9 613.0 L996.3 613.0 L1002.8 607.1 L1006.7 605.8 L1013.2 610.4 L1010.0 610.5 L1019.1 616.2 L1024.3 612.6 L1032.1 607.9 L1041.2 606.6 L1047.7 602.7 L1051.6 602.7 L1058.1 609.2 L1064.6 617.8 L1068.5 617.0 L1077.6 607.9 L1085.4 601.9 L1091.9 601.9 L1099.8 611.8 L1107.6 607.1 L1120.6 607.1 L1127.1 598.3 L1131.0 598.8 L1136.2 602.7 L1143.2 596.2 L1151.8 604.0 L1154.4 602.7 L1162.2 606.1 L1167.4 611.0 L1176.5 598.3 L1181.7 603.5 L1186.4 610.5 L1193.4 611.0 L1201.2 619.6 L1212.9 608.4 L1215.5 608.4 L1222.0 617.0 L1229.8 623.5 L1236.3 626.9 L1241.5 625.6 L1245.4 622.2 L1250.6 628.2 L1254.5 628.2 L1264.4 619.6 L1272.7 620.4 L1285.8 632.6 L1292.3 631.8 L1300.1 640.4 L1306.0 641.2 L1311.2 649.5" fill="none" stroke="#4f96c6" stroke-width="1.600" stroke-linejoin="round"/><path d="M790.5 286.0 V666.6 M856.5 286.0 V666.6 M923.5 286.0 V666.6 M989.5 286.0 V666.6 M1056.5 286.0 V666.6 M1123.5 286.0 V666.6 M1189.5 286.0 V666.6 M1256.5 286.0 V666.6" stroke="#000" stroke-opacity="0.050" stroke-width="1" fill="none"/><path d="M722.0 476.3 H1311.0" stroke="#4a4a4a" stroke-width="1.100" fill="none"/><path d="M720 285 H1313 M720 667.400 H1313" stroke="#1c1c1c" stroke-width="2" fill="none"/><path d="M721 284 V668.400 M1312 284 V668.400" stroke="#1c1c1c" stroke-width="2" fill="none"/><path d="M790.0 286 v-5 M790.0 666.400 v5.200 M856.7 286 v-5 M856.7 666.400 v5.200 M923.3 286 v-5 M923.3 666.400 v5.200 M989.9 286 v-5 M989.9 666.400 v5.200 M1056.5 286 v-5 M1056.5 666.400 v5.200 M1123.2 286 v-5 M1123.2 666.400 v5.200 M1189.8 286 v-5 M1189.8 666.400 v5.200 M1256.4 286 v-5 M1256.4 666.400 v5.200 M723 326.1 H717 M1310 326.1 H1316 M723 365.5 H717 M1310 365.5 H1316 M723 404.8 H717 M1310 404.8 H1316 M723 444.1 H717 M1310 444.1 H1316 M723 516.6 H717 M1310 516.6 H1316 M723 556.0 H717 M1310 556.0 H1316 M723 595.3 H717 M1310 595.3 H1316 M723 634.6 H717 M1310 634.6 H1316" stroke="#1c1c1c" stroke-width="1.700" fill="none"/><path d="M739.6 286.800 v-3 M739.6 665.600 v3 M756.2 286.800 v-3 M756.2 665.600 v3 M772.9 286.800 v-3 M772.9 665.600 v3 M806.2 286.800 v-3 M806.2 665.600 v3 M822.8 286.800 v-3 M822.8 665.600 v3 M839.5 286.800 v-3 M839.5 665.600 v3 M872.8 286.800 v-3 M872.8 665.600 v3 M889.5 286.800 v-3 M889.5 665.600 v3 M906.1 286.800 v-3 M906.1 665.600 v3 M939.4 286.800 v-3 M939.4 665.600 v3 M956.1 286.800 v-3 M956.1 665.600 v3 M972.8 286.800 v-3 M972.8 665.600 v3 M1006.1 286.800 v-3 M1006.1 665.600 v3 M1022.7 286.800 v-3 M1022.7 665.600 v3 M1039.4 286.800 v-3 M1039.4 665.600 v3 M1072.7 286.800 v-3 M1072.7 665.600 v3 M1089.4 286.800 v-3 M1089.4 665.600 v3 M1106.0 286.800 v-3 M1106.0 665.600 v3 M1139.3 286.800 v-3 M1139.3 665.600 v3 M1156.0 286.800 v-3 M1156.0 665.600 v3 M1172.7 286.800 v-3 M1172.7 665.600 v3 M1206.0 286.800 v-3 M1206.0 665.600 v3 M1222.6 286.800 v-3 M1222.6 665.600 v3 M1239.3 286.800 v-3 M1239.3 665.600 v3 M1272.6 286.800 v-3 M1272.6 665.600 v3 M1289.3 286.800 v-3 M1289.3 665.600 v3 M1305.9 286.800 v-3 M1305.9 665.600 v3 M723.300 299.0 H719.400 M1309.700 299.0 H1313.600 M723.300 308.0 H719.400 M1309.700 308.0 H1313.600 M723.300 317.0 H719.400 M1309.700 317.0 H1313.600 M723.300 338.3 H719.400 M1309.700 338.3 H1313.600 M723.300 347.3 H719.400 M1309.700 347.3 H1313.600 M723.300 356.3 H719.400 M1309.700 356.3 H1313.600 M723.300 377.7 H719.400 M1309.700 377.7 H1313.600 M723.300 386.7 H719.400 M1309.700 386.7 H1313.600 M723.300 395.7 H719.400 M1309.700 395.7 H1313.600 M723.300 417.0 H719.400 M1309.700 417.0 H1313.600 M723.300 426.0 H719.400 M1309.700 426.0 H1313.600 M723.300 435.0 H719.400 M1309.700 435.0 H1313.600 M723.300 456.3 H719.400 M1309.700 456.3 H1313.600 M723.300 465.3 H719.400 M1309.700 465.3 H1313.600 M723.300 489.5 H719.400 M1309.700 489.5 H1313.600 M723.300 498.5 H719.400 M1309.700 498.5 H1313.600 M723.300 507.5 H719.400 M1309.700 507.5 H1313.600 M723.300 528.8 H719.400 M1309.700 528.8 H1313.600 M723.300 537.8 H719.400 M1309.700 537.8 H1313.600 M723.300 546.8 H719.400 M1309.700 546.8 H1313.600 M723.300 568.2 H719.400 M1309.700 568.2 H1313.600 M723.300 577.2 H719.400 M1309.700 577.2 H1313.600 M723.300 586.2 H719.400 M1309.700 586.2 H1313.600 M723.300 607.5 H719.400 M1309.700 607.5 H1313.600 M723.300 616.5 H719.400 M1309.700 616.5 H1313.600 M723.300 625.5 H719.400 M1309.700 625.5 H1313.600 M723.300 646.8 H719.400 M1309.700 646.8 H1313.600 M723.300 655.8 H719.400 M1309.700 655.8 H1313.600" stroke="#1c1c1c" stroke-width="1.500" fill="none"/><g font-family="Liberation Sans, sans-serif" font-size="14.700" fill="#1c1c1c"><text x="789.5" y="274.400" text-anchor="middle">2500</text><text x="789.5" y="686.800" text-anchor="middle">2500</text><text x="856.2" y="274.400" text-anchor="middle">5000</text><text x="856.2" y="686.800" text-anchor="middle">5000</text><text x="922.8" y="274.400" text-anchor="middle">7500</text><text x="922.8" y="686.800" text-anchor="middle">7500</text><text x="989.4" y="274.400" text-anchor="middle">10000</text><text x="989.4" y="686.800" text-anchor="middle">10000</text><text x="1056.0" y="274.400" text-anchor="middle">12500</text><text x="1056.0" y="686.800" text-anchor="middle">12500</text><text x="1122.7" y="274.400" text-anchor="middle">15000</text><text x="1122.7" y="686.800" text-anchor="middle">15000</text><text x="1189.3" y="274.400" text-anchor="middle">17500</text><text x="1189.3" y="686.800" text-anchor="middle">17500</text><text x="1255.9" y="274.400" text-anchor="middle">20000</text><text x="1255.9" y="686.800" text-anchor="middle">20000</text><text x="1300.500" y="274.400" text-anchor="middle">Hz</text><text x="1300.500" y="686.800" text-anchor="middle">Hz</text><text x="711.800" y="331.2" text-anchor="end">-25.00</text><text x="1319.400" y="331.2">-25.00</text><text x="711.800" y="370.6" text-anchor="end">-50.00</text><text x="1319.400" y="370.6">-50.00</text><text x="711.800" y="409.9" text-anchor="end">-75.00</text><text x="1319.400" y="409.9">-75.00</text><text x="711.800" y="449.2" text-anchor="end">-100.00</text><text x="1319.400" y="449.2">-100.00</text><text x="711.800" y="521.7" text-anchor="end">-25.00</text><text x="1319.400" y="521.7">-25.00</text><text x="711.800" y="561.1" text-anchor="end">-50.00</text><text x="1319.400" y="561.1">-50.00</text><text x="711.800" y="600.4" text-anchor="end">-75.00</text><text x="1319.400" y="600.4">-75.00</text><text x="711.800" y="639.7" text-anchor="end">-100.00</text><text x="1319.400" y="639.7">-100.00</text></g></svg>
</body></html>
